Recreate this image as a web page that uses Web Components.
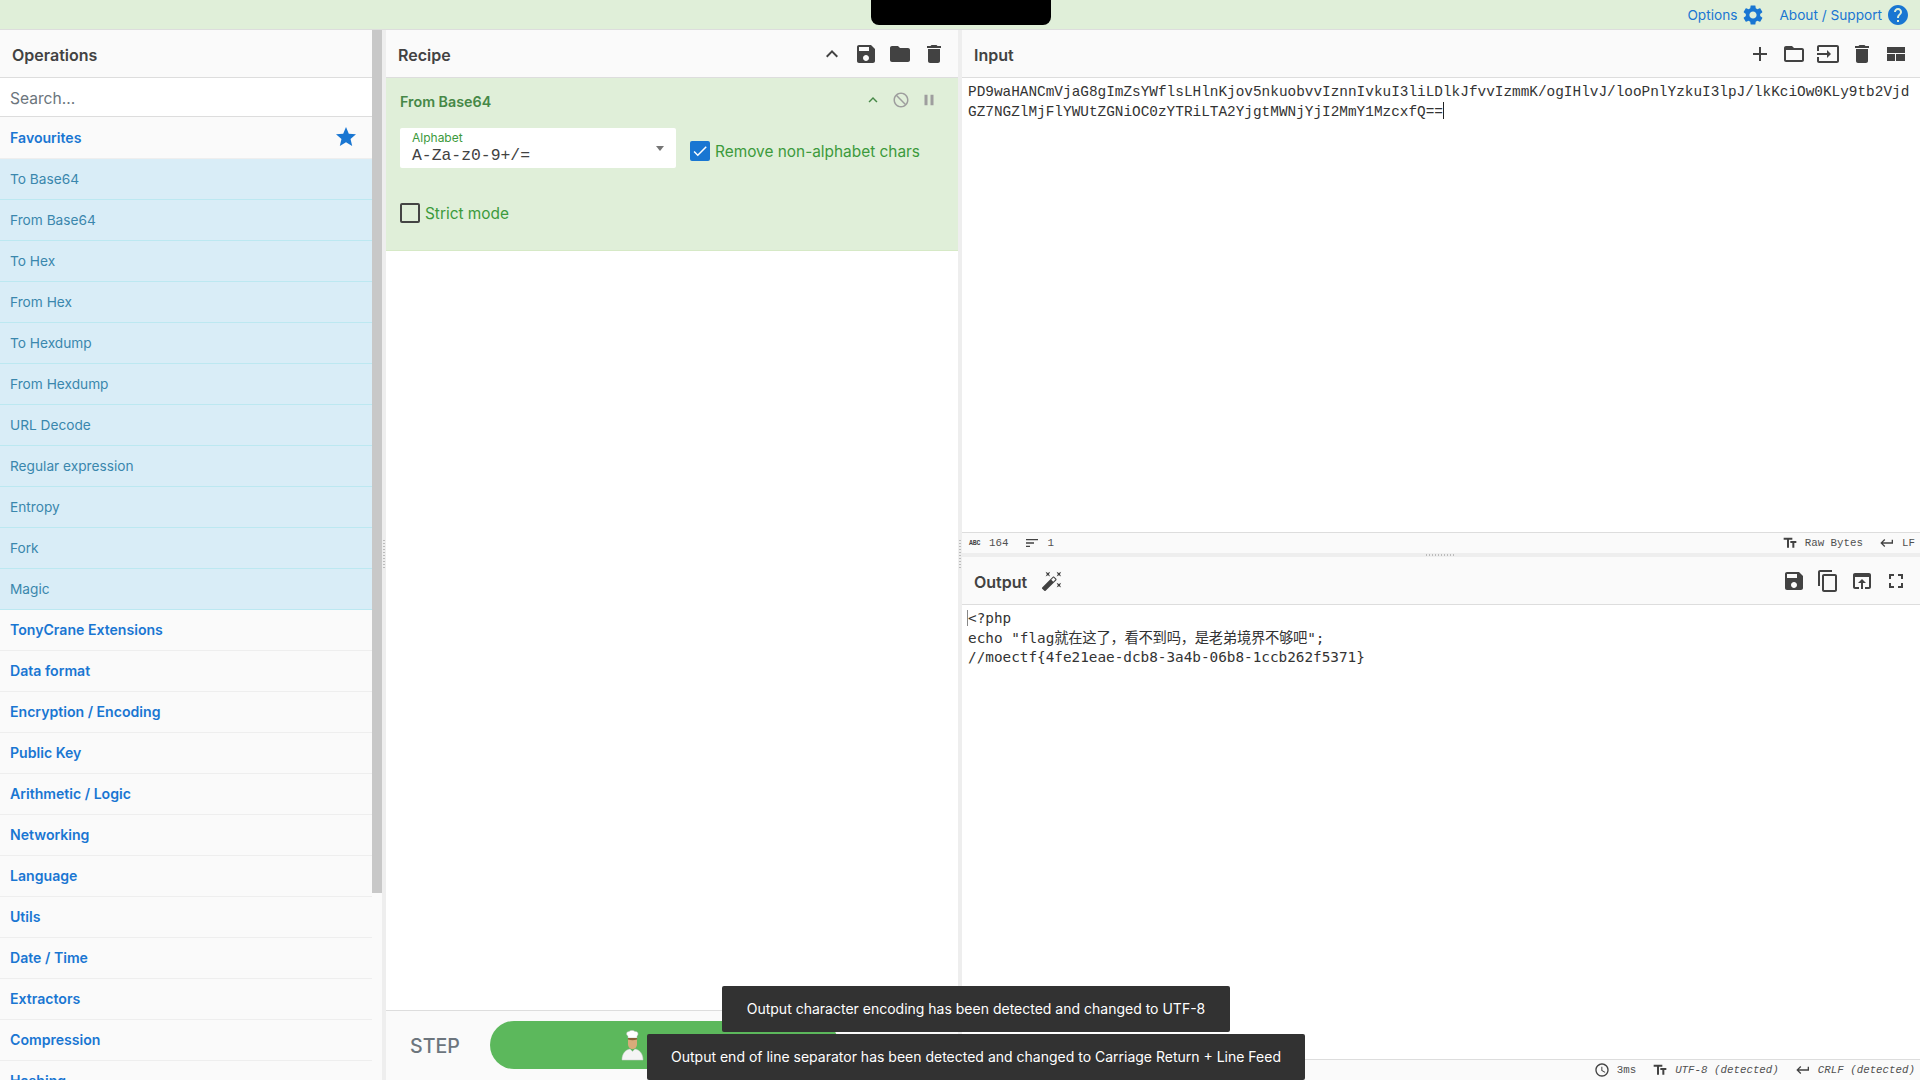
<!DOCTYPE html>
<html>
<head>
<meta charset="utf-8">
<title>CyberChef</title>
<style>
  html, body { margin: 0; height: 100%; overflow: hidden; background: #fff; }
  body { font-family: Inter, "Liberation Sans", sans-serif; font-size: 14px; color: #333; }
</style>
</head>
<body>
<cc-app></cc-app>
<script>
const ICONS = {
    save: 'M17 3H5c-1.11 0-2 .9-2 2v14c0 1.1.89 2 2 2h14c1.1 0 2-.9 2-2V7l-4-4zm-5 16c-1.66 0-3-1.34-3-3s1.34-3 3-3 3 1.34 3 3-1.34 3-3 3zm3-10H5V5h10v4z',
    folder: 'M10 4H4c-1.1 0-1.99.9-1.99 2L2 18c0 1.1.9 2 2 2h16c1.1 0 2-.9 2-2V8c0-1.1-.9-2-2-2h-8l-2-2z',
    folderOpen: 'M20 6h-8l-2-2H4c-1.1 0-1.99.9-1.99 2L2 18c0 1.1.9 2 2 2h16c1.1 0 2-.9 2-2V8c0-1.1-.9-2-2-2zm0 12H4V8h16v10z',
    trash: 'M6 19c0 1.1.9 2 2 2h8c1.1 0 2-.9 2-2V7H6v12zM19 4h-3.5l-1-1h-5l-1 1H5v2h14V4z',
    up: 'M7.41 15.41L12 10.83l4.59 4.58L18 14l-6-6-6 6z',
    add: 'M19 13h-6v6h-2v-6H5v-2h6V5h2v6h6v2z',
    input: 'M21 3.01H3c-1.1 0-2 .9-2 2V9h2V4.99h18v14.03H3V15H1v4.01c0 1.1.9 1.98 2 1.98h18c1.1 0 2-.88 2-1.98v-14c0-1.11-.9-2-2-2zM11 16l4-4-4-4v3H1v2h10v3z',
    layout: 'M3 19h8v-7H3v7zm9 0h9v-7h-9v7zM3 5v6h18V5H3z',
    copy: 'M16 1H4c-1.1 0-2 .9-2 2v14h2V3h12V1zm3 4H8c-1.1 0-2 .9-2 2v14c0 1.1.9 2 2 2h11c1.1 0 2-.9 2-2V7c0-1.1-.9-2-2-2zm0 16H8V7h11v14z',
    open: 'M19 4H5c-1.11 0-2 .9-2 2v12c0 1.1.89 2 2 2h4v-2H5V8h14v10h-4v2h4c1.1 0 2-.9 2-2V6c0-1.1-.89-2-2-2zm-7 6l-4 4h3v6h2v-6h3l-4-4z',
    full: 'M7 14H5v5h5v-2H7v-3zm-2-4h2V7h3V5H5v5zm12 7h-3v2h5v-5h-2v3zM14 5v2h3v3h2V5h-5z',
    gear: 'M19.14 12.94c.04-.3.06-.61.06-.94 0-.32-.02-.64-.07-.94l2.03-1.58c.18-.14.23-.41.12-.61l-1.92-3.32c-.12-.22-.37-.29-.59-.22l-2.39.96c-.5-.38-1.03-.7-1.62-.94l-.36-2.54c-.04-.24-.24-.41-.48-.41h-3.84c-.24 0-.43.17-.47.41l-.36 2.54c-.59.24-1.13.57-1.62.94l-2.39-.96c-.22-.08-.47 0-.59.22L2.74 8.87c-.12.21-.08.47.12.61l2.03 1.58c-.05.3-.09.63-.09.94s.02.64.07.94l-2.03 1.58c-.18.14-.23.41-.12.61l1.92 3.32c.12.22.37.29.59.22l2.39-.96c.5.38 1.03.7 1.62.94l.36 2.54c.05.24.24.41.48.41h3.84c.24 0 .44-.17.47-.41l.36-2.54c.59-.24 1.13-.56 1.62-.94l2.39.96c.22.08.47 0 .59-.22l1.92-3.32c.12-.22.07-.47-.12-.61l-2.01-1.58zM12 15.6c-1.98 0-3.6-1.62-3.6-3.6s1.62-3.6 3.6-3.6 3.6 1.62 3.6 3.6-1.62 3.6-3.6 3.6z',
    help: 'M12 2C6.48 2 2 6.48 2 12s4.48 10 10 10 10-4.48 10-10S17.52 2 12 2zm1 17h-2v-2h2v2zm2.07-7.75l-.9.92C13.45 12.9 13 13.5 13 15h-2v-.5c0-1.1.45-2.1 1.17-2.83l1.24-1.26c.37-.36.59-.86.59-1.41 0-1.1-.9-2-2-2s-2 .9-2 2H8c0-2.21 1.79-4 4-4s4 1.79 4 4c0 .88-.36 1.68-.93 2.25z',
    star: 'M12 17.27L18.18 21l-1.64-7.03L22 9.24l-7.19-.61L12 2 9.19 8.63 2 9.24l5.46 4.73L5.82 21z',
    block: 'M12 2C6.48 2 2 6.48 2 12s4.48 10 10 10 10-4.48 10-10S17.52 2 12 2zM4 12c0-4.42 3.58-8 8-8 1.85 0 3.55.63 4.9 1.69L5.69 16.9C4.63 15.55 4 13.85 4 12zm8 8c-1.85 0-3.55-.63-4.9-1.69L18.31 7.1C19.37 8.45 20 10.15 20 12c0 4.42-3.58 8-8 8z',
    pause: 'M6 19h4V5H6v14zm8-14v14h4V5h-4z',
    check: 'M9 16.17L4.83 12l-1.41 1.41L9 19 21 7l-1.41-1.41z',
    text: 'M2.5 4v3h5v12h3V7h5V4h-13zm19 5h-9v3h3v7h3v-7h3V9z',
    ret: 'M19 7v4H5.83l3.58-3.59L8 6l-6 6 6 6 1.41-1.41L5.83 13H21V7z',
    sort: 'M3 18h6v-2H3v2zM3 6v2h18V6H3zm0 7h12v-2H3v2z',
    clock: 'M11.99 2C6.47 2 2 6.48 2 12s4.47 10 9.99 10C17.52 22 22 17.52 22 12S17.52 2 11.99 2zM12 20c-4.42 0-8-3.58-8-8s3.58-8 8-8 8 3.58 8 8-3.58 8-8 8zm.5-13H11v6l5.25 3.15.75-1.23-4.5-2.67z',
    wand: 'M7.5 5.6L10 7 8.6 4.5 10 2 7.5 3.4 5 2l1.4 2.5L5 7zm12 9.8L17 14l1.4 2.5L17 19l2.5-1.4L22 19l-1.4-2.5L22 14zM22 2l-2.5 1.4L17 2l1.4 2.5L17 7l2.5-1.4L22 7l-1.4-2.5zm-7.63 5.29c-.39-.39-1.02-.39-1.41 0L1.29 18.96c-.39.39-.39 1.02 0 1.41l2.34 2.34c.39.39 1.02.39 1.41 0L16.7 11.05c.39-.39.39-1.02 0-1.41l-2.33-2.35zm-1.03 5.49l-2.12-2.12 2.44-2.44 2.12 2.12-2.44 2.44z'
};

class CcIcon extends HTMLElement {
    constructor() {
        super();
        this.attachShadow({ mode: 'open' });
        const size = this.getAttribute('size') || 24;
        const d = ICONS[this.getAttribute('name')];
        this.shadowRoot.innerHTML = `
          <style>
            :host { display: inline-flex; flex: none; align-items: center; justify-content: center; width: ${this.getAttribute('box') || size}px; height: ${size}px; color: var(--icon-color, #424242); }
            :host([flip]) svg { transform: scaleX(-1); }
            svg { display: block; fill: currentColor; }
          </style>
          <svg width="${size}" height="${size}" viewBox="0 0 24 24"><path d="${d}"/></svg>`;
    }
}
customElements.define('cc-icon', CcIcon);

const headTemplate = document.createElement('template');
headTemplate.innerHTML = `
  <style>
    :host { display: flex; flex: none; align-items: center; height: 47px; box-sizing: content-box; padding: 0 7px 0 12px; background: #fafafa; border-bottom: 1px solid #ddd; }
    .label { margin-top: 2px; font: 600 16px Inter, "Liberation Sans", sans-serif; color: #424242; }
    .extra { margin-left: 14px; display: flex; }
    .tools { margin-left: auto; display: flex; align-items: center; }
  </style>
  <span class="label"></span>
  <span class="extra"><slot name="extra"></slot></span>
  <span class="tools"><slot></slot></span>
`;

class PanelHead extends HTMLElement {
    constructor() {
        super();
        this.attachShadow({ mode: 'open' });
        this.shadowRoot.appendChild(headTemplate.content.cloneNode(true));
        this.shadowRoot.querySelector('.label').textContent = this.getAttribute('label');
    }
}
customElements.define('panel-head', PanelHead);

const opItemTemplate = document.createElement('template');
opItemTemplate.innerHTML = `
  <style>
    :host { display: flex; align-items: center; box-sizing: border-box; height: 41px; padding: 0 10px 1px; background: #d9edf7; border-bottom: 1px solid #bce8f1; color: #3a87ad; font: 400 13.7px Inter, "Liberation Sans", sans-serif; }
  </style>
  <slot></slot>
`;
class OpItem extends HTMLElement {
    constructor() {
        super();
        this.attachShadow({ mode: 'open' });
        this.shadowRoot.appendChild(opItemTemplate.content.cloneNode(true));
    }
}
customElements.define('op-item', OpItem);

const opCatTemplate = document.createElement('template');
opCatTemplate.innerHTML = `
  <style>
    :host { display: flex; flex: none; align-items: center; justify-content: space-between; box-sizing: border-box; height: 41px; padding: 0 10px 1px; background: #fafafa; border-bottom: 1px solid #eee; color: #1976d2; font: 600 14.1px Inter, "Liberation Sans", sans-serif; }
    .after { display: flex; margin-right: 4px; --icon-color: #1976d2; }
  </style>
  <slot></slot><span class="after"><slot name="after"></slot></span>
`;
class OpCat extends HTMLElement {
    constructor() {
        super();
        this.attachShadow({ mode: 'open' });
        this.shadowRoot.appendChild(opCatTemplate.content.cloneNode(true));
    }
}
customElements.define('op-cat', OpCat);

const opsTemplate = document.createElement('template');
opsTemplate.innerHTML = `
  <style>
    :host { display: flex; flex: none; width: 382px; height: 100%; overflow: hidden; background: #fafafa; }
    .col { width: 372px; display: flex; flex-direction: column; overflow: hidden; }
    .search { flex: none; height: 36px; padding: 2px 10px 0; display: flex; align-items: center; background: #fff; border-bottom: 1px solid #ddd; color: #6c757d; font: 400 15.6px Inter, "Liberation Sans", sans-serif; }
    .bar { width: 10px; flex: none; }
    .thumb { height: 863px; background: #c8c8c8; }
  </style>
  <div class="col">
    <panel-head label="Operations"></panel-head>
    <div class="search">Search...</div>
    <op-cat style="height:42px">Favourites<cc-icon slot="after" name="star"></cc-icon></op-cat>
    <div id="favs"></div>
    <div id="cats"></div>
  </div>
  <div class="bar"><div class="thumb"></div></div>
`;
class OpsPanel extends HTMLElement {
    constructor() {
        super();
        this.attachShadow({ mode: 'open' });
        this.shadowRoot.appendChild(opsTemplate.content.cloneNode(true));
        const favs = ['To Base64', 'From Base64', 'To Hex', 'From Hex', 'To Hexdump', 'From Hexdump', 'URL Decode', 'Regular expression', 'Entropy', 'Fork', 'Magic'];
        const cats = ['TonyCrane Extensions', 'Data format', 'Encryption / Encoding', 'Public Key', 'Arithmetic / Logic', 'Networking', 'Language', 'Utils', 'Date / Time', 'Extractors', 'Compression', 'Hashing'];
        const favBox = this.shadowRoot.getElementById('favs');
        favs.forEach(name => {
            const el = document.createElement('op-item');
            el.textContent = name;
            favBox.appendChild(el);
        });
        const catBox = this.shadowRoot.getElementById('cats');
        cats.forEach(name => {
            const el = document.createElement('op-cat');
            el.textContent = name;
            catBox.appendChild(el);
        });
    }
}
customElements.define('ops-panel', OpsPanel);

const checkTemplate = document.createElement('template');
checkTemplate.innerHTML = `
  <style>
    :host { display: inline-flex; align-items: center; gap: 5px; color: #3c9a3c; font: 400 15.4px Inter, "Liberation Sans", sans-serif; }
    .box { width: 20px; height: 20px; box-sizing: border-box; border: 2px solid #444; border-radius: 2px; display: flex; align-items: center; justify-content: center; }
    :host([checked]) .box { background: #1976d2; border-color: #1976d2; --icon-color: #fff; }
  </style>
  <span class="box"></span><slot></slot>
`;
class OpCheck extends HTMLElement {
    constructor() {
        super();
        this.attachShadow({ mode: 'open' });
        this.shadowRoot.appendChild(checkTemplate.content.cloneNode(true));
        if (this.hasAttribute('checked')) {
            this.shadowRoot.querySelector('.box').innerHTML = '<cc-icon name="check" size="18"></cc-icon>';
        }
    }
}
customElements.define('op-check', OpCheck);

const cardTemplate = document.createElement('template');
cardTemplate.innerHTML = `
  <style>
    :host { display: block; flex: none; height: 173px; box-sizing: border-box; padding: 0 14px; background: #e0efd9; border-bottom: 1px solid #d6e9c6; }
    .top { display: flex; align-items: center; height: 50px; }
    .name { font: 600 14.3px Inter, "Liberation Sans", sans-serif; color: #468847; margin-top: -3px; }
    .tools { margin-left: auto; display: flex; align-items: center; margin-top: -6px; margin-right: 1px; }
    .up { --icon-color: #468847; }
    .off { --icon-color: #9e9e9e; }
    .row { display: flex; align-items: center; gap: 14px; }
    .row op-check { margin-top: 6px; }
    .select { position: relative; width: 276px; height: 40px; box-sizing: border-box; padding: 3px 12px 0; background: #fff; border-radius: 2px; }
    .select small { display: block; font: 400 12px/14px Inter, "Liberation Sans", sans-serif; color: #3c9a3c; }
    .select div { font: 400 16.4px/20px "Liberation Mono", monospace; color: #424242; margin-top: 1px; }
    .caret { position: absolute; right: 12px; top: 18px; width: 0; height: 0; border: 4px solid transparent; border-top: 5px solid #757575; border-bottom: 0; }
    .strict { margin-top: 35px; }
  </style>
  <div class="top">
    <span class="name">From Base64</span>
    <span class="tools">
      <cc-icon class="up" name="up" size="18" box="28"></cc-icon>
      <cc-icon class="off" name="block" size="18" box="28" flip></cc-icon>
      <cc-icon class="off" name="pause" size="18" box="28"></cc-icon>
    </span>
  </div>
  <div class="row">
    <div class="select"><small>Alphabet</small><div>A-Za-z0-9+/=</div><span class="caret"></span></div>
    <op-check checked>Remove non-alphabet chars</op-check>
  </div>
  <div class="strict"><op-check>Strict mode</op-check></div>
`;
class OpCard extends HTMLElement {
    constructor() {
        super();
        this.attachShadow({ mode: 'open' });
        this.shadowRoot.appendChild(cardTemplate.content.cloneNode(true));
    }
}
customElements.define('op-card', OpCard);

const recipeTemplate = document.createElement('template');
recipeTemplate.innerHTML = `
  <style>
    :host { display: flex; flex-direction: column; flex: none; width: 572px; height: 100%; background: #fff; }
    .fill { flex: 1; }
    .foot { flex: none; height: 69px; display: flex; align-items: center; padding-left: 24px; background: #fafafa; border-top: 1px solid #ddd; }
    .step { width: 80px; font: 500 19.6px Inter, "Liberation Sans", sans-serif; color: #6c757d; }
    .bake { width: 349px; height: 48px; margin-top: -1px; border-radius: 24px; background: #5cb85c; display: flex; align-items: center; padding-left: 130px; box-sizing: border-box; }
    .auto { width: 21px; height: 21px; margin-left: 54px; margin-top: -2px; background: #1976d2; border-radius: 2px; }
  </style>
  <panel-head label="Recipe">
    <cc-icon name="up" box="34"></cc-icon>
    <cc-icon name="save" box="34"></cc-icon>
    <cc-icon name="folder" box="34"></cc-icon>
    <cc-icon name="trash" box="34"></cc-icon>
  </panel-head>
  <op-card></op-card>
  <div class="fill"></div>
  <div class="foot">
    <span class="step">STEP</span>
    <div class="bake">
      <svg width="27" height="31" viewBox="0 0 27 31">
        <path d="M8 6c-2-1-2-4.500 1-4.500 1-1.500 5-1.500 6 0 3-.5 4 3 2 4.500v2H8z" fill="#fff" stroke="#bbb" stroke-width=".5"/>
        <path d="M8 8h9v6c0 3-2 5-4.500 5S8 17 8 14z" fill="#d8ab7a"/>
        <path d="M8 8h9v1.500c-3 1-6 1-9 0z" fill="#8a6238"/>
        <path d="M2 30c0-6 3-10 8-11l2.500 2.500L15 19c5 1 8 5 8 11z" fill="#f4f4f4" stroke="#ccc" stroke-width=".5"/>
      </svg>
    </div>
    <div class="auto"></div>
  </div>
`;
class RecipePanel extends HTMLElement {
    constructor() {
        super();
        this.attachShadow({ mode: 'open' });
        this.shadowRoot.appendChild(recipeTemplate.content.cloneNode(true));
    }
}
customElements.define('recipe-panel', RecipePanel);

const statusTemplate = document.createElement('template');
statusTemplate.innerHTML = `
  <style>
    :host { display: flex; flex: none; align-items: center; height: 20px; padding: 0 5px 0 7px; background: #fafafa; border-top: 1px solid #ddd; font: 400 10.8px "Liberation Mono", monospace; color: #505050; --icon-color: #424242; }
    .left, .right { display: flex; align-items: center; }
    .right { margin-left: auto; }
  </style>
  <span class="left"><slot name="left"></slot></span>
  <span class="right"><slot></slot></span>
`;
class StatusBar extends HTMLElement {
    constructor() {
        super();
        this.attachShadow({ mode: 'open' });
        this.shadowRoot.appendChild(statusTemplate.content.cloneNode(true));
    }
}
customElements.define('status-bar', StatusBar);

const stItemTemplate = document.createElement('template');
stItemTemplate.innerHTML = `
  <style>
    :host { display: inline-flex; align-items: center; gap: 7px; margin-left: 16px; white-space: pre; }
    :host([first]) { margin-left: 0; }
    :host([italic]) { font-style: italic; }
  </style>
  <slot name="icon"></slot><slot></slot>
`;
class StItem extends HTMLElement {
    constructor() {
        super();
        this.attachShadow({ mode: 'open' });
        this.shadowRoot.appendChild(stItemTemplate.content.cloneNode(true));
    }
}
customElements.define('st-item', StItem);

const paneTemplate = document.createElement('template');
paneTemplate.innerHTML = `
  <style>
    :host { display: flex; flex-direction: column; background: #fff; min-height: 0; }
    .body { flex: 1; min-height: 0; padding: 4px 6px 0; overflow: hidden; }
  </style>
  <slot name="head"></slot>
  <div class="body"><slot></slot></div>
  <slot name="status"></slot>
`;
class IoPane extends HTMLElement {
    constructor() {
        super();
        this.attachShadow({ mode: 'open' });
        this.shadowRoot.appendChild(paneTemplate.content.cloneNode(true));
    }
}
customElements.define('io-pane', IoPane);

const inputTextTemplate = document.createElement('template');
inputTextTemplate.innerHTML = `
  <style>
    :host { display: block; font: 400 14.4px/20.2px "Liberation Mono", monospace; color: #333; word-break: break-all; }
    .caret { display: inline-block; width: 1px; height: 17px; background: #222; vertical-align: -3px; }
  </style>
  <slot></slot><span class="caret"></span>
`;
class InputText extends HTMLElement {
    constructor() {
        super();
        this.attachShadow({ mode: 'open' });
        this.shadowRoot.appendChild(inputTextTemplate.content.cloneNode(true));
    }
}
customElements.define('input-text', InputText);

const outputTextTemplate = document.createElement('template');
outputTextTemplate.innerHTML = `
  <style>
    :host { display: block; position: relative; font: 400 14.33px/19.6px "DejaVu Sans Mono", "Noto Sans CJK SC", monospace; color: #333; }
    .caret { position: absolute; left: -1px; top: 1px; width: 1px; height: 16px; background: #888; }
    .text { white-space: pre; }
  </style>
  <span class="caret"></span>
  <div class="text"><slot></slot></div>
`;
class OutputText extends HTMLElement {
    constructor() {
        super();
        this.attachShadow({ mode: 'open' });
        this.shadowRoot.appendChild(outputTextTemplate.content.cloneNode(true));
    }
}
customElements.define('output-text', OutputText);

const toastTemplate = document.createElement('template');
toastTemplate.innerHTML = `
  <style>
    :host { position: absolute; box-sizing: border-box; height: 46px; padding-bottom: 2px; display: flex; align-items: center; justify-content: center; background: #323232; color: #fff; border-radius: 2px; font: 400 14px Inter, "Liberation Sans", sans-serif; white-space: nowrap; }
  </style>
  <slot></slot>
`;
class CcToast extends HTMLElement {
    constructor() {
        super();
        this.attachShadow({ mode: 'open' });
        this.shadowRoot.appendChild(toastTemplate.content.cloneNode(true));
    }
}
customElements.define('cc-toast', CcToast);

const topTemplate = document.createElement('template');
topTemplate.innerHTML = `
  <style>
    :host { display: flex; flex: none; align-items: center; justify-content: flex-end; height: 29px; padding-right: 10px; background: #e0efd9; border-bottom: 1px solid #ddd; color: #1976d2; font: 400 13.65px Inter, "Liberation Sans", sans-serif; --icon-color: #1976d2; }
    a { display: inline-flex; align-items: center; gap: 4px; margin-left: 14px; }
  </style>
  <a>Options <cc-icon name="gear"></cc-icon></a>
  <a>About / Support <cc-icon name="help"></cc-icon></a>
`;
class TopBar extends HTMLElement {
    constructor() {
        super();
        this.attachShadow({ mode: 'open' });
        this.shadowRoot.appendChild(topTemplate.content.cloneNode(true));
    }
}
customElements.define('top-bar', TopBar);

const appTemplate = document.createElement('template');
appTemplate.innerHTML = `
  <style>
    :host { display: flex; flex-direction: column; position: relative; width: 1920px; height: 1080px; overflow: hidden; }
    .notch { position: absolute; left: 871px; top: 0; width: 180px; height: 25px; background: #000; border-radius: 0 0 8px 8px; }
    .main { flex: 1; min-height: 0; display: flex; }
    .gutter { flex: none; width: 4px; background: #eee; position: relative; }
    .gutter::after { content: ""; position: absolute; left: 1px; top: 510px; width: 2px; height: 30px; background: repeating-linear-gradient(#bbb 0 1px, transparent 1px 3px); }
    .io { flex: 1; min-width: 0; display: flex; flex-direction: column; }
    .in { height: 523px; flex: none; }
    .out { flex: 1; }
    .hgutter { flex: none; height: 4px; background: #eee; position: relative; }
    .hgutter::after { content: ""; position: absolute; left: 464px; top: 1px; width: 30px; height: 2px; background: repeating-linear-gradient(90deg, #bbb 0 1px, transparent 1px 3px); }
    .abc { font: 700 6.5px "Liberation Mono", monospace; width: 13px; letter-spacing: -.2px; color: #424242; }
    .cjk { letter-spacing: -.28px; }
    .t1 { left: 722px; top: 986px; width: 508px; }
    .t2 { left: 647px; top: 1034px; width: 658px; }
  </style>
  <top-bar></top-bar>
  <div class="main">
    <ops-panel></ops-panel>
    <div class="gutter"></div>
    <recipe-panel></recipe-panel>
    <div class="gutter"></div>
    <div class="io">
      <io-pane class="in">
        <panel-head slot="head" label="Input">
          <cc-icon name="add" box="34"></cc-icon>
          <cc-icon name="folderOpen" box="34"></cc-icon>
          <cc-icon name="input" box="34"></cc-icon>
          <cc-icon name="trash" box="34"></cc-icon>
          <cc-icon name="layout" box="34"></cc-icon>
        </panel-head>
        <input-text>PD9waHANCmVjaG8gImZsYWflsLHlnKjov5nkuobvvIznnIvkuI3liLDlkJfvvIzmmK/ogIHlvJ/looPnlYzkuI3lpJ/lkKciOw0KLy9tb2VjdGZ7NGZlMjFlYWUtZGNiOC0zYTRiLTA2YjgtMWNjYjI2MmY1MzcxfQ==</input-text>
        <status-bar slot="status">
          <st-item slot="left" first><span class="abc" slot="icon">ABC</span>164</st-item>
          <st-item slot="left"><cc-icon slot="icon" name="sort" size="16"></cc-icon>1</st-item>
          <st-item><cc-icon slot="icon" name="text" size="16"></cc-icon>Raw Bytes</st-item>
          <st-item><cc-icon slot="icon" name="ret" size="16"></cc-icon>LF</st-item>
        </status-bar>
      </io-pane>
      <div class="hgutter"></div>
      <io-pane class="out">
        <panel-head slot="head" label="Output">
          <cc-icon slot="extra" name="wand" size="22"></cc-icon>
          <cc-icon name="save" box="34"></cc-icon>
          <cc-icon name="copy" box="34"></cc-icon>
          <cc-icon name="open" box="34"></cc-icon>
          <cc-icon name="full" box="34"></cc-icon>
        </panel-head>
        <output-text>&lt;?php
echo "flag<span class="cjk">就在这了，看不到吗，是老弟境界不够吧</span>";
//moectf{4fe21eae-dcb8-3a4b-06b8-1ccb262f5371}</output-text>
        <status-bar slot="status">
          <st-item><cc-icon slot="icon" name="clock" size="16"></cc-icon>3ms</st-item>
          <st-item italic><cc-icon slot="icon" name="text" size="16"></cc-icon>UTF-8 (detected)</st-item>
          <st-item italic><cc-icon slot="icon" name="ret" size="16"></cc-icon>CRLF (detected)</st-item>
        </status-bar>
      </io-pane>
    </div>
  </div>
  <div class="notch"></div>
  <cc-toast class="t1">Output character encoding has been detected and changed to UTF-8</cc-toast>
  <cc-toast class="t2">Output end of line separator has been detected and changed to Carriage Return + Line Feed</cc-toast>
`;
class CcApp extends HTMLElement {
    constructor() {
        super();
        this.attachShadow({ mode: 'open' });
        this.shadowRoot.appendChild(appTemplate.content.cloneNode(true));
    }
}
customElements.define('cc-app', CcApp);
</script>
</body>
</html>
